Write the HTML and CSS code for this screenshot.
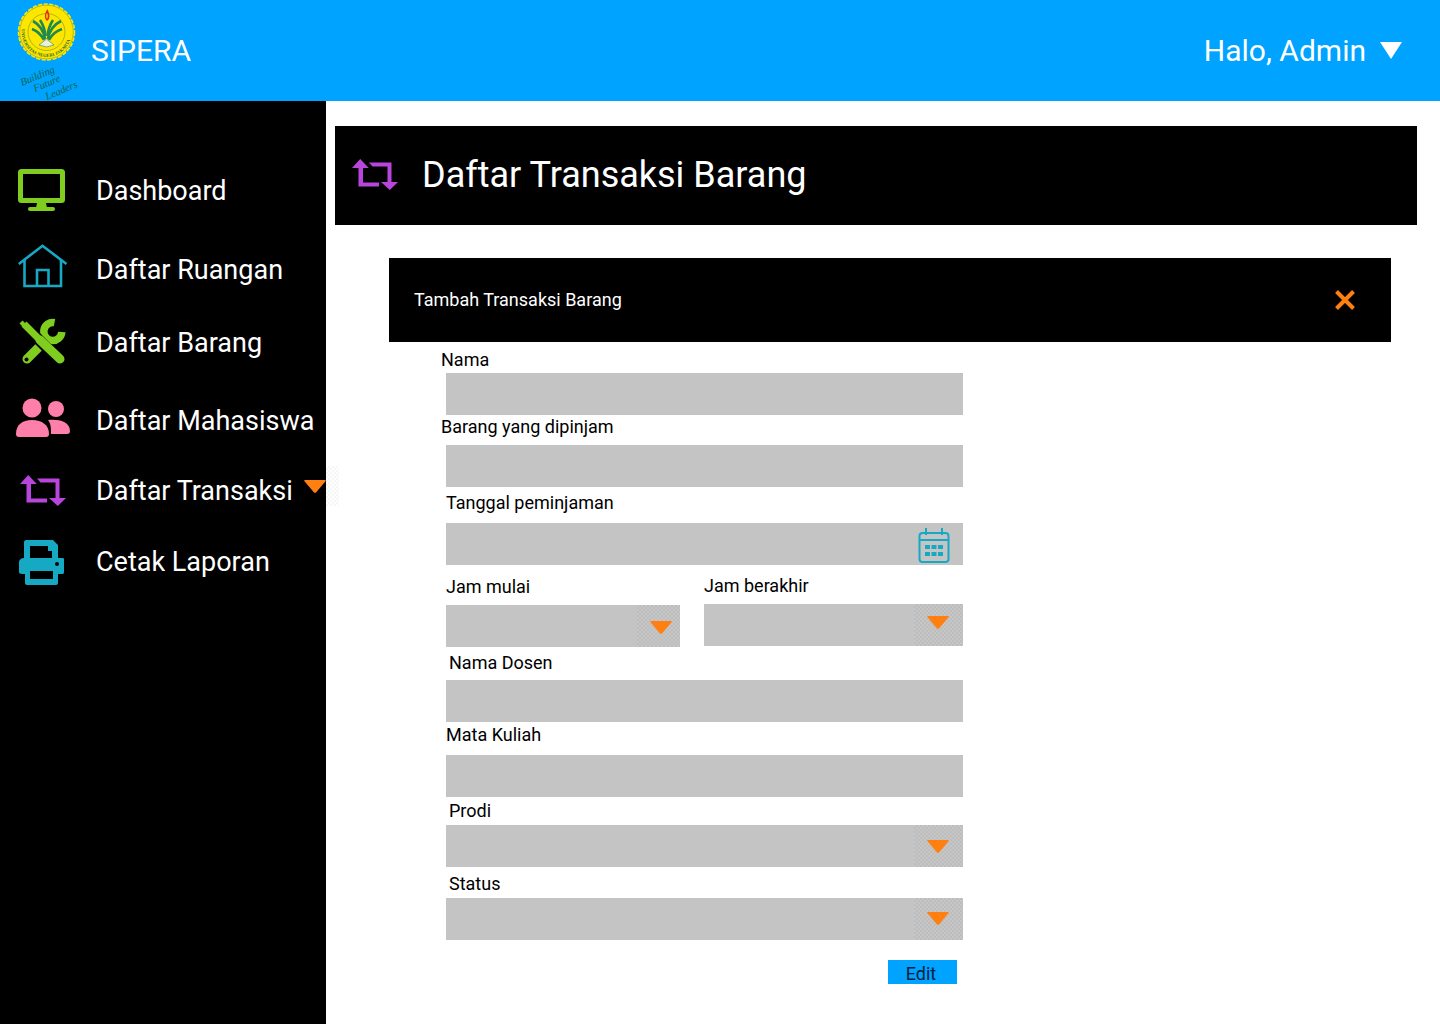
FILE: index.html
```html
<!DOCTYPE html>
<html>
  <head>
    <title>SIPERA</title>
    <link rel="stylesheet" href="styles.css">
  </head>
  <body>
    <svg class="defs" width="0" height="0">
      <symbol id="repeat" viewBox="0 0 46 31">
        <path d="M0 9 8.200 0 16.800 9H11V23.500H27V27.500H6.500V9ZM17 3.500H39.500V23H46L37.800 31 29 23H35.500V7.500H20.500Z"/>
      </symbol>
      <symbol id="caret" viewBox="0 0 22 13">
        <path d="M1 0H21Q22.500 0 21.500 1.200L12 12.400Q11 13.300 10 12.400L.5 1.200Q-.5 0 1 0Z"/>
      </symbol>
    </svg>

    <header class="topbar">
      <svg class="logo" width="91" height="101" viewBox="0 0 91 101">
        <circle cx="46.500" cy="32" r="27.500" fill="#ffe600" stroke="#ffe600" stroke-width="2.500" stroke-dasharray="4 1.500"/>
        <circle cx="46.500" cy="32" r="26.800" fill="none" stroke="#8fa01e" stroke-width=".6"/>
        <circle cx="46.500" cy="32" r="18.500" fill="#ffe600" stroke="#6f9a20" stroke-width=".6"/>
        <path id="ring" d="M22 27A25 25 0 1 0 71 27" fill="none"/>
        <text class="logo-ring"><textPath href="#ring" startOffset="2">UNIVERSITAS NEGERI JAKARTA</textPath></text>
        <path d="M47.500 9C45 13 44 16 46 20 47.500 22 49.500 19 49.500 16 49.500 13 48 11 47.500 9Z" fill="#e2301e"/>
        <path d="M47 13C46 15 46 17 47 19 48 17 48 15 47 13Z" fill="#ffe600"/>
        <g fill="none" stroke="#1f8a4c" stroke-width="2.600">
          <path d="M45 39C44 32 40 25 33 21"/>
          <path d="M44 40C41 34 37 31 32 29"/>
          <path d="M45.500 36C45 30 44 26 40 20"/>
          <path d="M48 39C49 32 53 25 61 21"/>
          <path d="M49 40C52 34 56 31 62 29"/>
          <path d="M47.500 36C48 30 49 26 53 20"/>
        </g>
        <path d="M39 45 46.500 39 54 45 46.500 47Z" fill="#e9efe0" stroke="#4f8f5d" stroke-width=".7"/>
        <text class="logo-motto" transform="translate(22 86) rotate(-23)">Building</text>
        <text class="logo-motto" transform="translate(35 92) rotate(-23)">Future</text>
        <text class="logo-motto" transform="translate(47 100) rotate(-23)">Leaders</text>
      </svg>
      <span class="brand">SIPERA</span>
      <div class="user">
        <span>Halo, Admin</span>
        <span class="user-caret"></span>
      </div>
    </header>

    <div class="layout">
      <nav class="sidebar">
        <a class="navitem">
          <svg class="navicon" viewBox="0 0 60 60">
            <rect x="7.500" y="11.500" width="42" height="29" rx="1" fill="none" stroke="#7fce1f" stroke-width="5"/>
            <path d="M24 43H33L34 48H23Z" fill="#7fce1f"/>
            <rect x="15" y="47" width="27" height="4" rx="2" fill="#7fce1f"/>
          </svg>
          <span class="navlabel">Dashboard</span>
        </a>
        <a class="navitem">
          <svg class="navicon" viewBox="0 0 60 60" fill="none" stroke="#16a9c4" stroke-width="2.600">
            <path d="M5.800 25 29.500 6.800 53.500 25"/>
            <path d="M11.500 21V47H48V21"/>
            <path d="M24 47V31H35.500V47"/>
          </svg>
          <span class="navlabel">Daftar Ruangan</span>
        </a>
        <a class="navitem">
          <svg class="navicon" viewBox="0 0 60 60" fill="none">
            <path d="M14 47 28 33" stroke="#7fce1f" stroke-width="9" stroke-linecap="round"/>
            <path d="M41.500 10.600A9 9 0 1 0 48.800 20" stroke="#7fce1f" stroke-width="7.500"/>
            <path d="M30 30 36 24" stroke="#7fce1f" stroke-width="8"/>
            <circle cx="13.500" cy="47.500" r="2" fill="#000"/>
            <path d="M11 13 46 48" stroke="#000" stroke-width="11"/>
            <path d="M11 12 27 28" stroke="#7fce1f" stroke-width="7"/>
            <path d="M27 28 47 47" stroke="#7fce1f" stroke-width="9" stroke-linecap="round"/>
            <path d="M9 14 12 11" stroke="#7fce1f" stroke-width="7"/>
          </svg>
          <span class="navlabel">Daftar Barang</span>
        </a>
        <a class="navitem">
          <svg class="navicon" viewBox="0 0 60 60" fill="#ff7fab">
            <circle cx="19" cy="18" r="9.500"/>
            <circle cx="43" cy="19" r="8"/>
            <path d="M3 44C3 35 9 30 19 30 29 30 36 35 36 44 36 46 35 47 33 47H6C4 47 3 46 3 44Z"/>
            <path d="M35 30C45 29 57 31 57 41 57 43 56 44 54 44H38C38 38 38 34 35 30Z"/>
          </svg>
          <span class="navlabel">Daftar Mahasiswa</span>
        </a>
        <a class="navitem">
          <span class="navicon navicon-repeat"><svg class="repeat" width="46" height="31"><use href="#repeat"/></svg></span>
          <span class="navlabel">Daftar Transaksi</span>
          <svg class="nav-caret" width="22" height="13"><use href="#caret"/></svg>
          <span class="nav-ghost"></span>
        </a>
        <a class="navitem">
          <svg class="navicon" viewBox="0 0 60 60" fill="#16a9c4">
            <path fill-rule="evenodd" d="M13 9H40L45 14V27H50C51 27 51 28 51 29V41C51 43 50 43 48 43H45V52C45 53 44 54 43 54H14C13 54 12 53 12 52V43H9C7 43 6 42 6 41V31C6 29 8 27 11 27V11C11 10 12 9 13 9ZM17 15V27H39V20H35V15ZM17 40V48H40V40Z"/>
            <circle cx="44" cy="33" r="2" fill="#000"/>
          </svg>
          <span class="navlabel">Cetak Laporan</span>
        </a>
      </nav>

      <main class="content">
        <div class="pagetitle">
          <svg class="repeat" width="46" height="31"><use href="#repeat"/></svg>
          <h1>Daftar Transaksi Barang</h1>
        </div>

        <section class="panel">
          <div class="panelhead">
            <span>Tambah Transaksi Barang</span>
            <svg class="close" width="22" height="22" viewBox="0 0 22 22">
              <path d="M2.500 2.500 19.500 19.500M19.500 2.500 2.500 19.500" stroke="#ff7f11" stroke-width="4"/>
            </svg>
          </div>

          <form class="form">
            <div class="field f-nama">
              <label>Nama</label>
              <input class="control" type="text">
            </div>
            <div class="field f-barang">
              <label>Barang yang dipinjam</label>
              <input class="control" type="text">
            </div>
            <div class="field f-tanggal">
              <label>Tanggal peminjaman</label>
              <div class="control control-date">
                <svg width="34" height="38" viewBox="0 0 34 38" fill="none" stroke="#16a9c4" stroke-width="2">
                  <rect x="2.500" y="6" width="29" height="29" rx="3"/>
                  <path d="M2.500 13H31.500M9 1V8M25 1V8"/>
                  <path d="M8 18h5v4H8zM14.500 18h5v4h-5zM21 18h5v4h-5zM8 25h5v4H8zM14.500 25h5v4h-5zM21 25h5v4h-5z" fill="#16a9c4" stroke="none"/>
                </svg>
              </div>
            </div>
            <div class="timerow">
              <div class="field f-mulai">
                <label>Jam mulai</label>
                <div class="control select">
                  <span class="dropbox dropbox-wide"><svg width="22" height="13"><use href="#caret"/></svg></span>
                </div>
              </div>
              <div class="field f-berakhir">
                <label>Jam berakhir</label>
                <div class="control select">
                  <span class="dropbox dropbox-high"><svg width="22" height="13"><use href="#caret"/></svg></span>
                </div>
              </div>
            </div>
            <div class="field f-dosen">
              <label>Nama Dosen</label>
              <input class="control" type="text">
            </div>
            <div class="field f-matkul">
              <label>Mata Kuliah</label>
              <input class="control" type="text">
            </div>
            <div class="field f-prodi">
              <label>Prodi</label>
              <div class="control select">
                <span class="dropbox"><svg width="22" height="13"><use href="#caret"/></svg></span>
              </div>
            </div>
            <div class="field f-status">
              <label>Status</label>
              <div class="control select">
                <span class="dropbox"><svg width="22" height="13"><use href="#caret"/></svg></span>
              </div>
            </div>
            <div class="actions">
              <button class="btn" type="button">Edit</button>
            </div>
          </form>
        </section>
      </main>
    </div>
  </body>
</html>
```

FILE: styles.css
```css
* {
  box-sizing: border-box;
}
html, body {
  margin: 0;
  height: 100%;
}
body {
  font-family: Roboto, "Liberation Sans", sans-serif;
  background: #fff;
  color: #000;
  overflow: hidden;
}
.defs {
  position: absolute;
}

/* top bar */
.topbar {
  height: 101px;
  background: #00a3ff;
  color: #fff;
  display: flex;
  align-items: center;
  padding-right: 38px;
}
.logo {
  flex: none;
}
.logo-ring {
  font-family: "Liberation Serif", serif;
  font-size: 4.600px;
  font-weight: bold;
  fill: #2a6a2a;
}
.logo-motto {
  font-family: "Liberation Serif", serif;
  font-style: italic;
  font-size: 10.500px;
  fill: #06664a;
}
.brand {
  font-size: 30px;
}
.user {
  margin-left: auto;
  display: flex;
  align-items: center;
  gap: 14px;
  font-size: 30px;
}
.user-caret {
  width: 0;
  height: 0;
  border-left: 11px solid transparent;
  border-right: 11px solid transparent;
  border-top: 17px solid #fff;
}

/* sidebar */
.layout {
  display: flex;
  height: 923px;
}
.sidebar {
  width: 326px;
  flex: none;
  background: #000;
  color: #fff;
  padding-top: 49px;
  display: grid;
  grid-template-rows: 80px 78px 68px 88px 52px 90px;
  align-content: start;
  font-size: 27px;
}
.navitem {
  display: flex;
  align-items: center;
  position: relative;
  padding-left: 13px;
}
.navicon {
  width: 60px;
  height: 60px;
  flex: none;
  margin-right: 23px;
}
.navicon-repeat {
  display: flex;
  align-items: center;
  justify-content: center;
}
.navlabel {
  padding-top: 1px;
}
.repeat {
  fill: #b845dc;
  flex: none;
}
.nav-caret {
  fill: #ff7f11;
  margin-left: auto;
  margin-bottom: 8px;
}
.nav-ghost {
  position: absolute;
  left: 326px;
  top: 2px;
  width: 13px;
  height: 40px;
  background: repeating-conic-gradient(#f6f6f6 0 25%, #fff 0 50%) 0 0 / 4px 4px;
}

/* main */
.content {
  flex: 1;
  padding: 25px 23px 0 9px;
}
.pagetitle {
  height: 99px;
  background: #000;
  color: #fff;
  display: flex;
  align-items: center;
  gap: 24px;
  padding: 0 0 2px 17px;
}
.pagetitle h1 {
  margin: 0;
  font-size: 36px;
  font-weight: 400;
}
.panel {
  margin: 33px 0 0 54px;
  width: 1002px;
}
.panelhead {
  height: 84px;
  background: #000;
  color: #fff;
  display: flex;
  align-items: center;
  justify-content: space-between;
  padding: 0 35px 0 25px;
  font-size: 18px;
}
.panelhead span {
  margin-bottom: 2px;
}

/* form */
.form {
  margin-left: 57px;
  width: 517px;
  padding-top: 8px;
  font-size: 18px;
}
.field label {
  display: block;
  height: 20px;
  line-height: 20px;
}
.control {
  display: block;
  width: 100%;
  height: 42px;
  border: 0;
  padding: 0;
  background: #c4c4c4;
}
.control-date {
  display: flex;
  justify-content: flex-end;
  padding-right: 12px;
}
.control-date svg {
  margin-top: 4px;
}
.select {
  display: flex;
  justify-content: flex-end;
}
.dropbox {
  width: 49px;
  height: 100%;
  padding: 15px 2px 0 0;
  background: repeating-conic-gradient(#bdbdbd 0 25%, #c6c6c6 0 50%) 0 0 / 4px 4px;
}
.dropbox svg {
  display: block;
  margin: 0 auto;
  fill: #ff7f11;
}
.dropbox-wide {
  width: 43px;
  padding: 16px 0 0 5px;
}
.dropbox-high {
  padding-top: 12px;
}
.f-status .dropbox {
  padding-top: 14px;
}

.f-nama label { margin: 0 0 3px -5px; }
.f-barang { margin-top: 2px; }
.f-barang label { margin: 0 0 8px -5px; }
.f-tanggal { margin-top: 6px; }
.f-tanggal label { margin-bottom: 10px; }

.timerow {
  display: grid;
  grid-template-columns: 234px 259px;
  column-gap: 24px;
  align-items: start;
}
.f-mulai { margin-top: 12px; }
.f-mulai label { margin-bottom: 8px; }
.f-berakhir { margin-top: 11px; }
.f-berakhir label { margin-bottom: 8px; }

.f-dosen { margin-top: 6px; }
.f-dosen label { margin: 0 0 7px 3px; }
.f-matkul { margin-top: 3px; }
.f-matkul label { margin-bottom: 10px; }
.f-prodi { margin-top: 4px; }
.f-prodi label { margin: 0 0 4px 3px; }
.f-status { margin-top: 7px; }
.f-status label { margin: 0 0 4px 3px; }

.actions {
  margin-top: 20px;
  display: flex;
  justify-content: flex-end;
  padding-right: 6px;
}
.btn {
  width: 69px;
  height: 24px;
  border: 0;
  padding: 4px 3px 0 0;
  background: #00a3ff;
  color: #00203f;
  font: inherit;
  line-height: 20px;
}
```
